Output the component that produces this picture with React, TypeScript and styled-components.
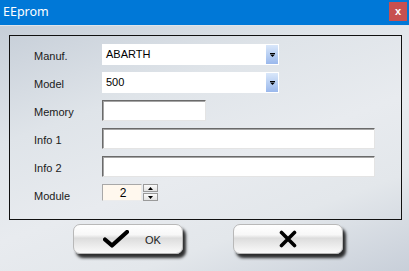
import { createGlobalStyle, styled } from "styled-components";

const GlobalStyle = createGlobalStyle`
  html, body {
    margin: 0;
    padding: 0;
  }
  body {
    font-family: "Liberation Sans", Arial, sans-serif;
  }
`;

const Window = styled.div`
  width: 409px;
  height: 271px;
  display: flex;
  flex-direction: column;
  overflow: hidden;
`;

const TitleBar = styled.div`
  height: 26px;
  background: #0078d7;
  display: flex;
  align-items: center;
  justify-content: space-between;
  padding: 0 2px 0 3px;
  box-sizing: border-box;
  border-bottom: 1px solid #dfe4ea;
`;

const Title = styled.span`
  color: #ffffff;
  font-family: "Noto Sans", "Open Sans", sans-serif;
  font-size: 12.5px;
  margin-top: -2px;
`;

const CloseButton = styled.div`
  width: 18px;
  height: 19px;
  background: #c75050;
  color: #ffffff;
  font-family: "Liberation Sans", sans-serif;
  font-weight: bold;
  font-size: 11px;
  display: flex;
  align-items: center;
  justify-content: center;
  margin-bottom: 3px;
`;

const Body = styled.div`
  flex: 1;
  display: flex;
  flex-direction: column;
  background: linear-gradient(
    160deg,
    #c6ced8 0%,
    #dfe4e9 30%,
    #e8ebef 55%,
    #e3e7eb 75%,
    #c8cfd9 100%
  );
  padding: 9px 0 0 9px;
`;

const Group = styled.div`
  width: 393px;
  height: 185px;
  box-sizing: border-box;
  border: 1px solid #111111;
  display: grid;
  grid-template-columns: 68px 1fr;
  grid-auto-rows: 21px;
  row-gap: 7px;
  padding: 8px 0 0 24px;
  align-content: start;
`;

const Label = styled.div`
  font-size: 11px;
  color: #1a1a1a;
  display: flex;
  align-items: center;
  padding-top: 2px;
`;

const Combo = styled.div<{ $width: number }>`
  width: ${(p) => p.$width}px;
  height: 21px;
  background: #ffffff;
  display: flex;
  align-items: stretch;
  box-sizing: border-box;
`;

const ComboValue = styled.div`
  flex: 1;
  font-size: 11px;
  color: #000;
  padding: 4px 0 0 4px;
`;

const DropButton = styled.div`
  width: 12px;
  margin: 1px 1px 1px 0;
  background: linear-gradient(to bottom, #dae7fa 0%, #b9d0f3 50%, #9ab8ec 100%);
  display: flex;
  align-items: center;
  justify-content: center;
`;

const TextBox = styled.div<{ $width: number }>`
  width: ${(p) => p.$width}px;
  height: 21px;
  box-sizing: border-box;
  background: #ffffff;
  border: 1px solid;
  border-color: #6a6a6a #e4e4e4 #e4e4e4 #6a6a6a;
  box-shadow: inset 1px 1px 0 #a5a5a5;
`;

const SpinRow = styled.div`
  display: flex;
  align-items: flex-start;
  gap: 1px;
`;

const SpinField = styled.div`
  width: 40px;
  height: 17px;
  box-sizing: border-box;
  background: #fff8ee;
  border: 1px solid;
  border-color: #a8a8a8 #ececec #ececec #a8a8a8;
  font-size: 12px;
  color: #000;
  display: flex;
  align-items: center;
  justify-content: center;
  padding-left: 2px;
`;

const SpinButtons = styled.div`
  display: flex;
  flex-direction: column;
  gap: 1px;
`;

const SpinButton = styled.div`
  width: 15px;
  height: 8px;
  box-sizing: border-box;
  border: 1px solid #9a9a9a;
  background: linear-gradient(to bottom, #fbfbfb, #e2e2e2);
  display: flex;
  align-items: center;
  justify-content: center;
`;

const ButtonRow = styled.div`
  display: flex;
  gap: 50px;
  padding: 4px 0 0 64px;
`;

const PushButton = styled.div<{ $shift?: number }>`
  width: 110px;
  height: 30px;
  box-sizing: border-box;
  border: 1px solid #b8b8b8;
  border-radius: 7px;
  background: linear-gradient(
    to bottom,
    #ffffff 0%,
    #f7f7f7 35%,
    #dcdcdc 47%,
    #e4e4e4 60%,
    #f2f2f2 85%,
    #fafafa 100%
  );
  box-shadow: 3px 4px 3px rgba(0, 0, 0, 0.8);
  display: flex;
  align-items: center;
  justify-content: center;
  gap: 16px;
  padding-left: ${(p) => p.$shift ?? 0}px;
  font-size: 11px;
  color: #222;
`;

const ButtonText = styled.span`
  margin-top: 1px;
`;

function ComboArrow() {
  return (
    <svg width="5" height="4" viewBox="0 0 5 4">
      <rect x="0" y="0" width="5" height="1" fill="#000" />
      <path d="M0 1.5 L5 1.5 L2.5 4 Z" fill="#000" />
    </svg>
  );
}

function SpinArrow({ up }: { up?: boolean }) {
  return (
    <svg width="5" height="3" viewBox="0 0 5 3">
      {up ? (
        <path d="M0 3 L5 3 L2.5 0 Z" fill="#000" />
      ) : (
        <path d="M0 0 L5 0 L2.5 3 Z" fill="#000" />
      )}
    </svg>
  );
}

function CheckIcon() {
  return (
    <svg width="26" height="18" viewBox="0 0 26 18">
      <path
        d="M2 9.5 L9 15.5 L24 2"
        fill="none"
        stroke="#000"
        strokeWidth="4.2"
        strokeLinecap="round"
        strokeLinejoin="round"
      />
    </svg>
  );
}

function CrossIcon() {
  return (
    <svg width="18" height="18" viewBox="0 0 18 18">
      <path
        d="M2.5 2.5 L15.5 15.5 M15.5 2.5 L2.5 15.5"
        fill="none"
        stroke="#000"
        strokeWidth="3.6"
        strokeLinecap="round"
      />
    </svg>
  );
}

export default function App() {
  return (
    <>
      <GlobalStyle />
      <Window>
        <TitleBar>
          <Title>EEprom</Title>
          <CloseButton>x</CloseButton>
        </TitleBar>
        <Body>
          <Group>
            <Label>Manuf.</Label>
            <Combo $width={177}>
              <ComboValue>ABARTH</ComboValue>
              <DropButton>
                <ComboArrow />
              </DropButton>
            </Combo>

            <Label>Model</Label>
            <Combo $width={177}>
              <ComboValue>500</ComboValue>
              <DropButton>
                <ComboArrow />
              </DropButton>
            </Combo>

            <Label>Memory</Label>
            <TextBox $width={104} />

            <Label>Info 1</Label>
            <TextBox $width={273} />

            <Label>Info 2</Label>
            <TextBox $width={273} />

            <Label>Module</Label>
            <SpinRow>
              <SpinField>2</SpinField>
              <SpinButtons>
                <SpinButton>
                  <SpinArrow up />
                </SpinButton>
                <SpinButton>
                  <SpinArrow />
                </SpinButton>
              </SpinButtons>
            </SpinRow>
          </Group>
          <ButtonRow>
            <PushButton $shift={8}>
              <CheckIcon />
              <ButtonText>OK</ButtonText>
            </PushButton>
            <PushButton>
              <CrossIcon />
            </PushButton>
          </ButtonRow>
        </Body>
      </Window>
    </>
  );
}
